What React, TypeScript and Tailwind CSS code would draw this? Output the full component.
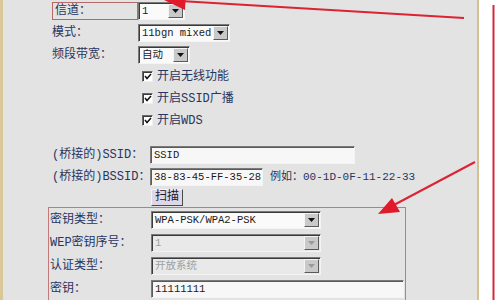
import React from 'react';

const FONT = 'font-["Liberation_Mono","Noto_Sans_CJK_SC",monospace]';

// 下拉框（经典 Windows 样式）
const Select = ({ value, className, disabled }: { value: string; className: string; disabled?: boolean }) => (
    <div
        className={`flex h-[18px] border border-t-[#7a7a7a] border-l-[#7a7a7a] border-b-[#f4f4f4] border-r-[#f4f4f4] shadow-[inset_1px_1px_0_#3a3a3a] ${disabled ? 'bg-[#e9e9e9]' : 'bg-[#fafafa]'} ${className}`}
    >
        <span className={`flex-1 overflow-hidden whitespace-nowrap pl-[3px] pt-[1px] text-[10.5px] leading-[15px] ${disabled ? 'text-[#a0a0a0]' : 'text-[#1a1a1a]'}`}>{value}</span>
        <span className="my-[1px] mr-[1px] flex w-[15px] shrink-0 items-center justify-center border border-t-[#f4f4f4] border-l-[#f4f4f4] border-b-[#5a5a5a] border-r-[#5a5a5a] bg-[#c9c9c9]">
            <svg width="7" height="4" viewBox="0 0 7 4">
                <polygon points="0,0 7,0 3.5,4" fill={disabled ? '#9a9a9a' : '#111'} />
            </svg>
        </span>
    </div>
);

const Input = ({ value, className }: { value: string; className: string }) => (
    <div
        className={`h-[18px] overflow-hidden whitespace-nowrap border border-t-[#7a7a7a] border-l-[#7a7a7a] border-b-[#f4f4f4] border-r-[#f4f4f4] bg-[#f7f7f7] pl-[3px] pt-[1px] text-[10.5px] leading-[15px] text-[#1a1a1a] shadow-[inset_1px_1px_0_#5a5a5a] ${className}`}
    >
        {value}
    </div>
);

const Check = ({ label }: { label: string }) => (
    <div className="flex h-[23px] items-center">
        <div className="w-[90px]" />
        <span className="flex h-[11px] w-[11px] items-center justify-center border border-t-[#6a6a6a] border-l-[#6a6a6a] border-b-[#f0f0f0] border-r-[#f0f0f0] bg-white shadow-[inset_1px_1px_0_#3a3a3a]">
            <svg width="8" height="7" viewBox="0 0 8 7">
                <polyline points="1,3 3,5.5 7,1" fill="none" stroke="#111" strokeWidth="1.5" />
            </svg>
        </span>
        <span className="ml-[4px] text-[12px] text-[#283560]">{label}</span>
    </div>
);

const Label = ({ text, className }: { text: string; className: string }) => (
    <span className={`shrink-0 whitespace-nowrap text-[12px] text-[#283560] ${className}`}>{text}</span>
);

const App = () => {
    return (
        <div className={`relative flex h-[300px] w-[500px] overflow-hidden ${FONT}`}>
            <div className="w-[3px] bg-[#d9c79a]" />
            <div className="flex w-[474px] flex-col bg-[#e3e3e3] pl-[49px]">
                <div className="flex h-[23px] items-center">
                    <span className="flex h-[18px] w-[86px] items-center border border-[#b56a6a] pl-[2px] text-[12px] text-[#283560]">信道：</span>
                    <Select value="1" className="w-[47px]" />
                </div>
                <div className="flex h-[23px] items-center">
                    <Label text="模式：" className="w-[86px]" />
                    <Select value="11bgn mixed" className="w-[92px]" />
                </div>
                <div className="flex h-[23px] items-center">
                    <Label text="频段带宽：" className="w-[86px]" />
                    <Select value="自动" className="w-[52px]" />
                </div>
                <Check label="开启无线功能" />
                <Check label="开启SSID广播" />
                <Check label="开启WDS" />

                <div className="mt-[12px] flex h-[23px] items-center">
                    <Label text="(桥接的)SSID：" className="w-[98px]" />
                    <Input value="SSID" className="w-[205px]" />
                </div>
                <div className="flex h-[23px] items-center">
                    <Label text="(桥接的)BSSID：" className="w-[98px]" />
                    <Input value="38-83-45-FF-35-28" className="w-[113px]" />
                    <span className="ml-[7px] text-[11px] text-[#283560]">例如：00-1D-0F-11-22-33</span>
                </div>
                <div className="flex h-[20px] items-center pl-[99px]">
                    <button className="h-[17px] border border-t-[#f4f4f4] border-l-[#f4f4f4] border-b-[#4a4a4a] border-r-[#4a4a4a] bg-[#dcd8ea] px-[3px] text-[12px] leading-[14px] text-[#1a1a2a]">扫描</button>
                </div>

                <div className="-ml-[4px] w-[358px] flex-1 border border-b-0 border-[#c07a7a] pl-[1px]">
                    <div className="flex h-[23px] items-center">
                        <Label text="密钥类型：" className="w-[101px]" />
                        <Select value="WPA-PSK/WPA2-PSK" className="w-[170px]" />
                    </div>
                    <div className="flex h-[23px] items-center">
                        <Label text="WEP密钥序号：" className="w-[101px]" />
                        <Select value="1" className="w-[170px]" disabled />
                    </div>
                    <div className="flex h-[23px] items-center">
                        <Label text="认证类型：" className="w-[101px]" />
                        <Select value="开放系统" className="w-[170px]" disabled />
                    </div>
                    <div className="flex h-[23px] items-center">
                        <Label text="密钥：" className="w-[101px]" />
                        <Input value="11111111" className="w-[253px]" />
                    </div>
                </div>
            </div>
            <div className="w-[2px] bg-[#d4bf8e]" />
            <div className="flex-1 bg-white" />

            {/* 红色标注箭头 */}
            <svg className="pointer-events-none absolute inset-0" width="500" height="300" viewBox="0 0 500 300">
                <line x1="464" y1="18" x2="180" y2="1" stroke="#dd2233" strokeWidth="2" />
                <polygon points="164,0 186,-9 185,10" fill="#e01a2a" />
                <line x1="475" y1="162" x2="392" y2="206" stroke="#dd2233" strokeWidth="2" />
                <polygon points="378,214 392,198 400,212" fill="#e01a2a" />
                <line x1="493.5" y1="5" x2="493.5" y2="300" stroke="#d42a3a" strokeWidth="2" />
            </svg>
        </div>
    );
};

export default App;
